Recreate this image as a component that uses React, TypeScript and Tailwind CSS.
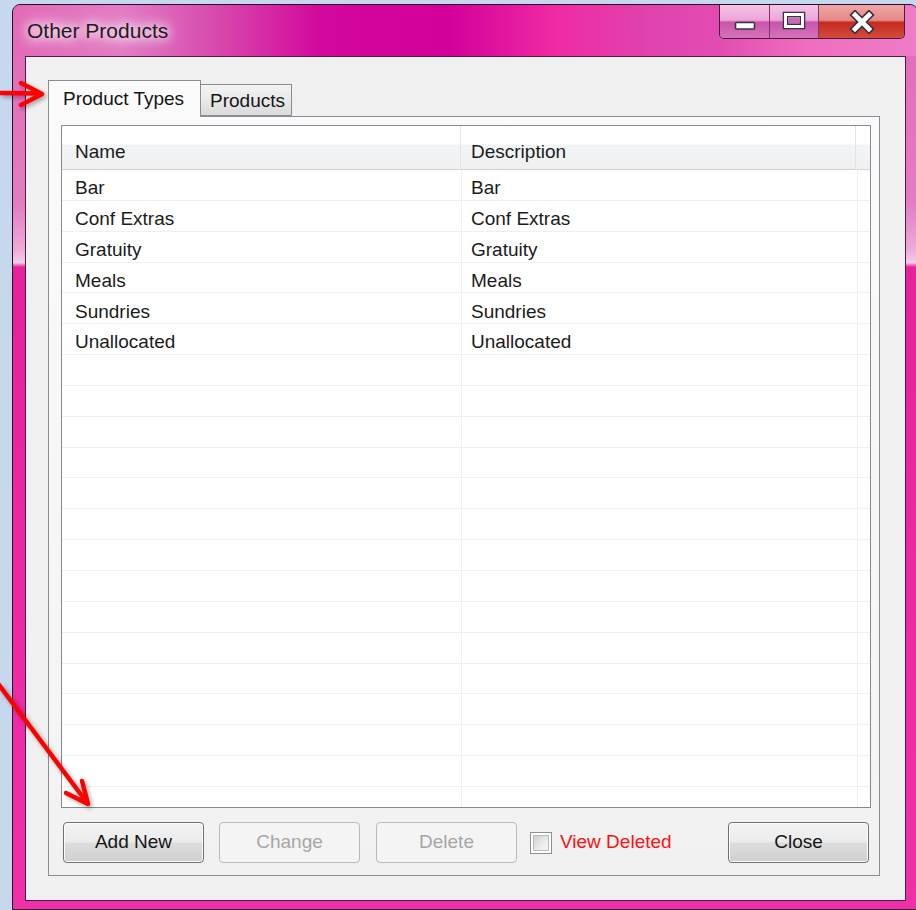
type Row = { name: string; description: string }

const productTypes: Row[] = [
  { name: 'Bar', description: 'Bar' },
  { name: 'Conf Extras', description: 'Conf Extras' },
  { name: 'Gratuity', description: 'Gratuity' },
  { name: 'Meals', description: 'Meals' },
  { name: 'Sundries', description: 'Sundries' },
  { name: 'Unallocated', description: 'Unallocated' },
]

// listview keeps drawing grid lines below the last item
const EMPTY_ROWS = 14

function CaptionButtons() {
  return (
    <div className="absolute right-[12px] top-0 flex h-[34px] overflow-hidden rounded-b-[5px] border border-t-0 border-[#4a1a3c]">
      <div className="flex w-[50px] items-center justify-center border-r border-[#7a3a68] bg-[linear-gradient(180deg,#f4c4e6_0%,#eba6d8_46%,#c955aa_52%,#d673bc_100%)]">
        <svg width="24" height="12" viewBox="0 0 24 12" className="mt-[8px]">
          <rect x="2.5" y="2.5" width="19" height="6.5" rx="1" fill="#fff" stroke="#3b3340" strokeWidth="1.6" />
        </svg>
      </div>
      <div className="flex w-[49px] items-center justify-center border-r border-[#7a3a68] bg-[linear-gradient(180deg,#f4c4e6_0%,#eba6d8_46%,#c955aa_52%,#d673bc_100%)]">
        <svg width="24" height="20" viewBox="0 0 24 20" className="-mt-[2px]">
          <rect x="3.5" y="3.5" width="17" height="12" fill="none" stroke="#3b3340" strokeWidth="5.5" />
          <rect x="3.5" y="3.5" width="17" height="12" fill="none" stroke="#fff" strokeWidth="3" />
          <rect x="6.5" y="7" width="11" height="5.5" fill="#c86cb2" />
        </svg>
      </div>
      <div className="flex w-[85px] items-center justify-center bg-[linear-gradient(180deg,#f0a6a6_0%,#e58986_46%,#c72a1f_53%,#d24c3d_100%)]">
        <svg width="26" height="24" viewBox="0 0 26 24" className="mt-[1px]">
          <path d="M6 5 L20 19 M20 5 L6 19" stroke="#3b3340" strokeWidth="8" strokeLinecap="square" />
          <path d="M6 5 L20 19 M20 5 L6 19" stroke="#fff" strokeWidth="4.6" strokeLinecap="square" />
        </svg>
      </div>
    </div>
  )
}

function WinButton({ label, disabled }: { label: string; disabled?: boolean }) {
  return (
    <button
      disabled={disabled}
      className={
        disabled
          ? 'h-[41px] w-[141px] rounded-[4px] border border-[#b6babd] bg-[#f4f4f4] text-[19px] text-[#a6a6a6]'
          : 'h-[41px] w-[141px] rounded-[4px] border border-[#707070] bg-[linear-gradient(180deg,#f3f3f3_0%,#ebebeb_48%,#dddddd_52%,#cfcfcf_100%)] text-[19px] text-[#151515] shadow-[inset_0_0_0_1px_#fcfcfc]'
      }
    >
      {label}
    </button>
  )
}

export default function App() {
  return (
    <div className="relative h-[910px] w-[916px] overflow-hidden bg-[#c5d8ee] font-['Liberation_Sans',Arial,sans-serif]">
      {/* window frame */}
      <div className="ml-[12px] mt-[4px] flex h-[906px] w-[906px] flex-col rounded-t-[8px] border border-[#2c0c24] bg-[linear-gradient(180deg,#e06ab8_0%,#e47cc2_22%,#ecaad8_27%,#f4cce8_28.5%,#e4229c_29%,#f030a8_100%)]">
        <div className="relative flex h-[51px] shrink-0 items-center rounded-t-[7px] pl-[14px] bg-[linear-gradient(90deg,#e36ab8_0%,#e27cc4_12%,#d84cae_22%,#d3089c_34%,#d2009a_48%,#f02aa4_60%,#e042ae_70%,#e24cb2_78%,#f06ec0_88%,#ee7cc6_100%)]">
          <span className="text-[21px] text-[#1c1c1c] [text-shadow:0_0_10px_#fff,0_0_14px_#fff,0_0_18px_#fde]">
            Other Products
          </span>
          <CaptionButtons />
        </div>

        <div className="flex flex-1 pb-[8px] pl-[12px] pr-[11px]">
          {/* client area */}
          <div className="flex flex-1 flex-col border border-[#4e1c42] bg-[#f0f0f0] pb-[24px] pl-[22px] pr-[25px] pt-[23px]">
            {/* tab headers */}
            <div className="relative z-10 flex items-end">
              <div className="-mb-px flex h-[37px] w-[153px] items-start border border-b-0 border-[#898c95] bg-[#fafafa] pl-[14px] pt-[4px] text-[19px] text-[#151515]">
                Product Types
              </div>
              <div className="flex h-[32px] w-[91px] items-center border border-l-0 border-[#898c95] bg-[linear-gradient(180deg,#f3f3f3_0%,#e9e9e9_50%,#dadada_100%)] pl-[9px] pt-[3px] text-[19px] text-[#151515]">
                Products
              </div>
            </div>

            {/* tab page */}
            <div className="flex flex-1 flex-col border border-[#898c95] bg-[linear-gradient(180deg,#fafafa_0%,#f4f4f4_85%,#f0f0f0_100%)] pb-[12px] pl-[12px] pr-[8px] pt-[8px]">
              {/* listview */}
              <div className="flex flex-1 flex-col border border-[#858990] bg-white text-[19px] text-[#1b1b1b]">
                <div className="flex h-[44px] shrink-0 border-b border-[#d5d5d5] bg-[linear-gradient(180deg,#ffffff_0%,#ffffff_42%,#f3f4f6_44%,#eff0f2_100%)]">
                  <div className="flex w-[399px] items-center border-r border-[#e2e3e5] pl-[13px] pt-[10px]">Name</div>
                  <div className="flex w-[395px] items-center border-r border-[#e2e3e5] pl-[10px] pt-[10px]">Description</div>
                  <div className="flex-1" />
                </div>

                {productTypes.map((row) => (
                  <div key={row.name} className="flex h-[30.85px] shrink-0 border-b border-[#f0f0f0]">
                    <div className="flex w-[400px] items-center border-r border-[#f0f0f0] pl-[13px] pt-[7px]">{row.name}</div>
                    <div className="flex w-[396px] items-center border-r border-[#f0f0f0] pl-[9px] pt-[7px]">{row.description}</div>
                    <div className="flex-1" />
                  </div>
                ))}

                {Array.from({ length: EMPTY_ROWS }).map((_, i) => (
                  <div key={i} className="flex h-[30.85px] shrink-0 border-b border-[#f0f0f0]">
                    <div className="w-[400px] border-r border-[#f0f0f0]" />
                    <div className="w-[396px] border-r border-[#f0f0f0]" />
                    <div className="flex-1" />
                  </div>
                ))}

                <div className="flex flex-1">
                  <div className="w-[400px] border-r border-[#f0f0f0]" />
                  <div className="w-[396px] border-r border-[#f0f0f0]" />
                  <div className="flex-1" />
                </div>
              </div>

              {/* buttons */}
              <div className="mt-[14px] flex items-center pl-[2px] pr-[2px]">
                <WinButton label="Add New" />
                <div className="ml-[15px]">
                  <WinButton label="Change" disabled />
                </div>
                <div className="ml-[16px]">
                  <WinButton label="Delete" disabled />
                </div>
                <label className="ml-[13px] flex items-center gap-[8px]">
                  <span className="flex h-[22px] w-[22px] items-center justify-center border border-[#8e8f8f] bg-white p-[2px]">
                    <span className="h-full w-full border border-[#b9b9b9] bg-[linear-gradient(135deg,#cfd0d2_0%,#e6e7e8_50%,#f7f7f7_100%)]" />
                  </span>
                  <span className="text-[19px] text-[#ff1010]">View Deleted</span>
                </label>
                <div className="ml-auto">
                  <WinButton label="Close" />
                </div>
              </div>
            </div>
          </div>
        </div>
      </div>

      {/* red callout arrows */}
      <svg
        width="916"
        height="910"
        viewBox="0 0 916 910"
        className="pointer-events-none absolute inset-0 drop-shadow-[2px_2px_2px_rgba(0,0,0,0.35)]"
      >
        <g stroke="#ff0000" strokeWidth="4.5" fill="none" strokeLinecap="round" strokeLinejoin="round">
          <path d="M-4 93 L40 93.5" />
          <path d="M21 83 L42 94 L21 105" />
          <path d="M-4 681 L85 800" />
          <path d="M82 781 L88 804 L66 793" />
        </g>
      </svg>
    </div>
  )
}
